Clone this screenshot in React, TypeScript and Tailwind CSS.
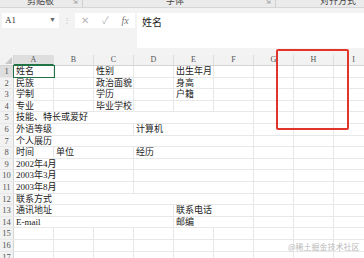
import React from "react";

type Cell = { span: number; text?: string };

const C = (text?: string, span = 1): Cell => ({ span, text });
const blanks = (n: number): Cell[] => Array.from({ length: n }, () => C());

const rows: Cell[][] = [
  [C("姓名"), C(), C("性别"), C(), C("出生年月"), ...blanks(4)],
  [C("民族"), C(), C("政治面貌"), C(), C("身高"), ...blanks(4)],
  [C("学制"), C(), C("学历"), C(), C("户籍"), ...blanks(4)],
  [C("专业"), C(), C("毕业学校"), C(), C(), ...blanks(4)],
  [C("技能、特长或爱好", 6), ...blanks(3)],
  [C("外语等级", 3), C("计算机", 3), ...blanks(3)],
  [C("个人展历", 6), ...blanks(3)],
  [C("时间"), C("单位", 2), C("经历", 3), ...blanks(3)],
  [C("2002年4月"), C(undefined, 2), C(undefined, 3), ...blanks(3)],
  [C("2003年3月"), C(undefined, 2), C(undefined, 3), ...blanks(3)],
  [C("2003年8月"), C(undefined, 2), C(undefined, 3), ...blanks(3)],
  [C("联系方式", 6), ...blanks(3)],
  [C("通讯地址", 4), C("联系电话", 2), ...blanks(3)],
  [C("E-mail", 4), C("邮编", 2), ...blanks(3)],
  blanks(9),
  blanks(9),
  blanks(9),
];

const cols = ["A", "B", "C", "D", "E", "F", "G", "H", "I"];
const FONT = { fontFamily: '"Liberation Serif", "Noto Sans CJK SC", serif' };

export default function App() {
  return (
    <div className="relative w-[364px] h-[258px] overflow-hidden bg-[#f3f3f3]" style={FONT}>
      {/* ribbon bottom strip */}
      <div className="relative h-[8px] bg-[#ebebeb] border-b border-[#d6d6d6] overflow-hidden text-[9px] leading-[9px] text-[#444]">
        <span className="absolute left-[27px] top-[-3px]">剪贴板</span>
        <span className="absolute left-[72px] top-[-2px] text-[7px] text-[#999]">⇲</span>
        <div className="absolute left-[82px] top-0 h-full w-px bg-[#cfcfcf]" />
        <span className="absolute left-[166px] top-[-3px]">字体</span>
        <span className="absolute left-[265px] top-[-2px] text-[7px] text-[#999]">⇲</span>
        <div className="absolute left-[275px] top-0 h-full w-px bg-[#cfcfcf]" />
        <span className="absolute left-[320px] top-[-3px]">对齐方式</span>
      </div>

      {/* formula bar */}
      <div className="flex h-[47px] pt-[5px] pb-[7px] pl-[2px]">
        <div className="flex items-center justify-between w-[57px] h-[15px] bg-white px-[3px] text-[9px] text-[#333]">
          <span>A1</span>
          <span className="text-[7px] text-[#666]">▼</span>
        </div>
        <div className="w-[16px] h-[15px] flex items-center justify-center text-[8px] text-[#bbb]">⋮</div>
        <div className="flex items-center justify-around w-[60px] h-[15px] bg-white text-[10px] text-[#b5b5b5]">
          <span>✕</span>
          <span>✓</span>
          <span className="italic text-[#777] text-[10px]">fx</span>
        </div>
        <div className="ml-[2px] flex-1 bg-white pl-[5px] pt-[1px] text-[10px] text-[#222]" style={{ fontFamily: '"Noto Sans CJK SC", sans-serif' }}>
          姓名
        </div>
      </div>

      {/* grid */}
      <div className="bg-white">
        {/* header row */}
        <div className="flex h-[11px] bg-[#f2f2f2] border-b border-[#d4d4d4] text-[8px] leading-[10px] text-[#555]">
          <div className="relative w-[14px] shrink-0 border-r border-[#d4d4d4]">
            <div className="absolute right-[1px] bottom-[1px] w-0 h-0 border-l-[7px] border-l-transparent border-b-[7px] border-b-[#c8c8c8]" />
          </div>
          {cols.map((c, i) => (
            <div
              key={c}
              className={
                "w-[40px] shrink-0 text-center border-r border-[#dedede] " +
                (i === 0 ? "bg-[#dedede] border-b border-b-[#217346]" : "")
              }
            >
              {c}
            </div>
          ))}
        </div>

        {rows.map((r, ri) => (
          <div key={ri} className="flex h-[11.6px] border-b border-[#e8e8e8] text-[9px] leading-[11px] text-[#222]">
            <div
              className={
                "w-[14px] shrink-0 text-center text-[8.5px] text-[#555] border-r border-[#d4d4d4] " +
                (ri === 0 ? "bg-[#dedede]" : "bg-[#f2f2f2]")
              }
            >
              {ri + 1}
            </div>
            {r.map((cell, ci) => (
              <div
                key={ci}
                className={
                  "relative shrink-0 border-r border-[#e8e8e8] whitespace-nowrap pl-[2px] " +
                  (ri === 0 && ci === 0 ? "outline outline-[1.5px] outline-[#217346] z-10" : "")
                }
                style={{ width: cell.span * 40 }}
              >
                {cell.text}
              </div>
            ))}
          </div>
        ))}
      </div>

      {/* red annotation box */}
      <div className="absolute left-[276px] top-[49px] w-[73px] h-[81px] border-2 border-[#e2342a] rounded-[2px]" />

      {/* watermark */}
      <div
        className="absolute left-[288px] top-[241px] text-[8px] text-[#b9b9b9]"
        style={{ fontFamily: '"Noto Sans CJK SC", sans-serif' }}
      >
        @稀土掘金技术社区
      </div>
    </div>
  );
}
